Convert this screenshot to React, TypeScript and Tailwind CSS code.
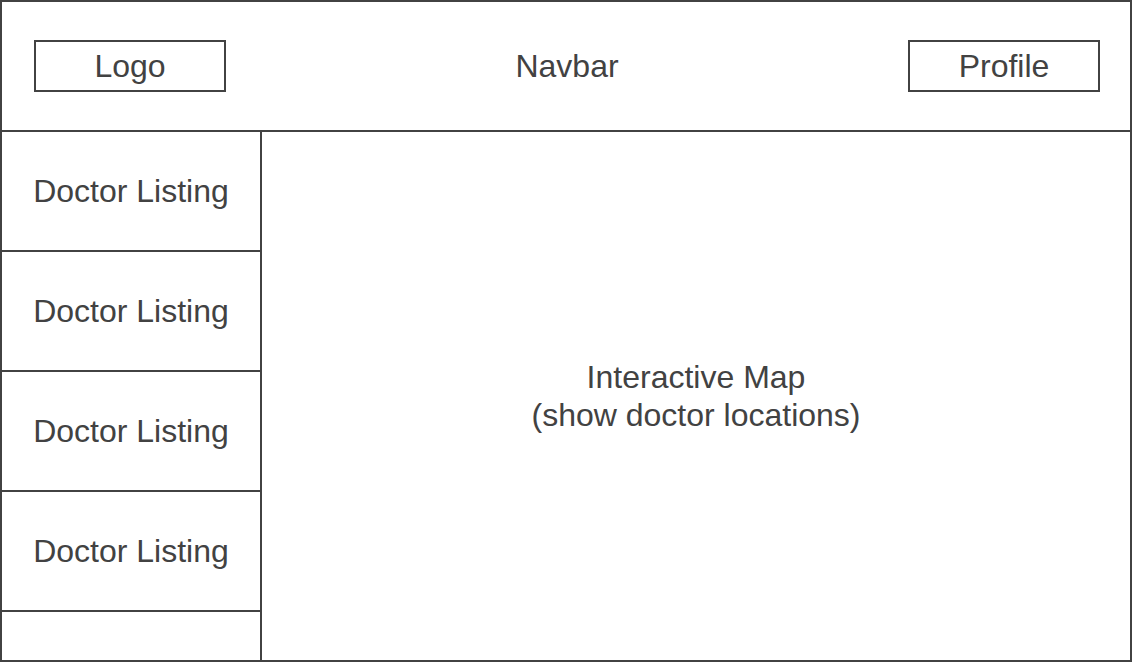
export default function App() {
  const listings = ["Doctor Listing", "Doctor Listing", "Doctor Listing", "Doctor Listing"];

  return (
    <div
      className="w-[1132px] h-[662px] bg-white border-2 border-[#424242] flex flex-col text-[#424242] text-[32px]"
      style={{ fontFamily: '"Liberation Sans", Arial, sans-serif' }}
    >
      <header className="h-[130px] shrink-0 border-b-2 border-[#424242] flex items-center justify-between pl-8 pr-[30px]">
        <div className="w-[192px] h-[52px] border-2 border-[#424242] flex items-center justify-center leading-none">
          Logo
        </div>
        <div className="leading-none">Navbar</div>
        <div className="w-[192px] h-[52px] border-2 border-[#424242] flex items-center justify-center leading-none">
          Profile
        </div>
      </header>
      <div className="flex flex-1 min-h-0">
        <aside className="w-[260px] shrink-0 border-r-2 border-[#424242] flex flex-col">
          {listings.map((label, i) => (
            <div
              key={i}
              className="h-[120px] shrink-0 border-b-2 border-[#424242] flex items-center justify-center leading-none"
            >
              {label}
            </div>
          ))}
        </aside>
        <main className="flex-1 flex items-center justify-center text-center leading-[38px]">
          <p>
            Interactive Map
            <br />
            (show doctor locations)
          </p>
        </main>
      </div>
    </div>
  );
}
